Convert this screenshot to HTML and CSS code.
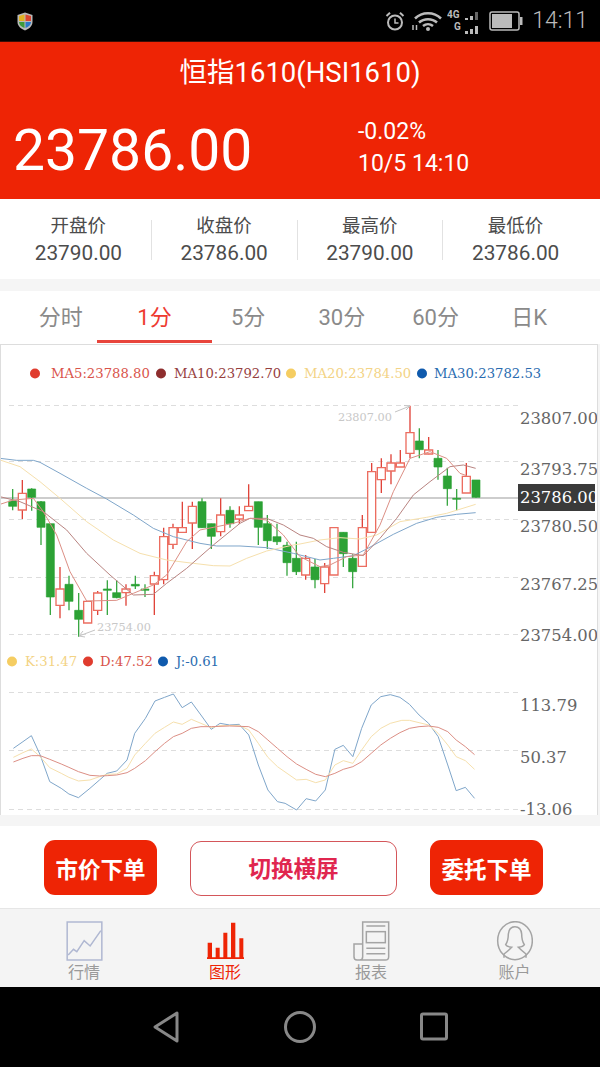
FILE: index.html
```html
<!DOCTYPE html>
<html>
  <head>
    <meta charset="UTF-8" />
    <title>恒指1610(HSI1610)</title>
    <link rel="stylesheet" href="styles.css">
  </head>
  <body>
    <div class="status-bar">
      <svg class="shield" width="16" height="19" viewBox="0 0 16 19">
        <path d="M8 .5 15.5 3v7c0 4-3.5 7-7.5 8.500C4 17 .5 14 .5 10V3z" fill="#b9b9b9"/>
        <path d="M7.500 2.500 2 4v5h5.500z" fill="#e0b020"/>
        <path d="M8.500 2.500 14 4v5H8.500z" fill="#d8452f"/>
        <path d="M2 10h5.500v6C4.500 15 2 13 2 10z" fill="#3d9a3a"/>
        <path d="M8.500 10H14c0 3-2.500 5-5.500 6z" fill="#2a78c8"/>
      </svg>
      <div class="status-right">
        <svg width="20" height="20" viewBox="0 0 20 20" fill="none" stroke="#bbb">
          <circle cx="10" cy="11.500" r="7" stroke-width="2"/>
          <path d="M10 7.500v4.500h3.500" stroke-width="1.500"/>
          <path d="M1.500 5 5 1.800M18.500 5 15 1.800" stroke-width="2"/>
        </svg>
        <svg class="wifi" width="30" height="20" viewBox="0 0 30 20" fill="none" stroke="#bbb" stroke-width="2.500">
          <path d="M3 7.500C10 .5 22 .5 29 7.500M7 11.500c5-4.500 13-4.500 18 0M11 15c3-2.500 7-2.500 10 0"/>
          <circle cx="16" cy="18" r="2" fill="#bbb" stroke="none"/>
          <path d="M1 19v-5M4.500 14v5" stroke-width="1.500"/>
        </svg>
        <svg class="signal" width="33" height="30" viewBox="0 0 33 30">
          <text class="net-label" x="0" y="12">4G</text>
          <text class="net-label" x="7" y="24">G</text>
          <path d="M18 12h3v2h-3zM23 10h3v4h-3z" fill="#bbb"/>
          <path d="M28 6h3v8h-3z" fill="#666"/>
          <path d="M18 25h3v3h-3zM23 23h3v5h-3zM28 20h3v8h-3z" fill="#bbb"/>
        </svg>
        <svg class="battery" width="34" height="20" viewBox="0 0 34 20">
          <rect x="1" y="1" width="29" height="18" rx="2" fill="none" stroke="#bbb" stroke-width="1.500"/>
          <rect x="3" y="3" width="20" height="14" fill="#bbb"/>
          <rect x="31" y="6" width="2.500" height="8" fill="#bbb"/>
        </svg>
        <span class="clock">14:11</span>
      </div>
    </div>

    <div class="quote-head">
      <div class="quote-title">恒指1610(HSI1610)</div>
      <div class="quote-row">
        <div class="quote-price">23786.00</div>
        <div class="quote-side">
          <div>-0.02%</div>
          <div>10/5 14:10</div>
        </div>
      </div>
    </div>

    <div class="stats">
      <div class="stat"><div>开盘价</div><div>23790.00</div></div>
      <div class="stat-sep"></div>
      <div class="stat"><div>收盘价</div><div>23786.00</div></div>
      <div class="stat-sep"></div>
      <div class="stat"><div>最高价</div><div>23790.00</div></div>
      <div class="stat-sep"></div>
      <div class="stat"><div>最低价</div><div>23786.00</div></div>
    </div>

    <div class="tabs">
      <div class="tab">分时</div>
      <div class="tab active">1分</div>
      <div class="tab">5分</div>
      <div class="tab">30分</div>
      <div class="tab">60分</div>
      <div class="tab">日K</div>
    </div>

    <div class="chart">
      <svg class="chart-svg" width="596" height="470" viewBox="1 345 596 470">
        <!-- legend -->
        <circle cx="35" cy="373.500" r="5" fill="#e03c2e"/>
        <text class="legend" x="51" y="378" fill="#d9534a">MA5:23788.80</text>
        <circle cx="161" cy="373.500" r="5" fill="#8e2e2e"/>
        <text class="legend" x="174" y="378" fill="#96403e">MA10:23792.70</text>
        <circle cx="291" cy="373.500" r="5" fill="#f5cd62"/>
        <text class="legend" x="304" y="378" fill="#f3d384">MA20:23784.50</text>
        <circle cx="422" cy="373.500" r="5" fill="#0f5aad"/>
        <text class="legend" x="434" y="378" fill="#2a6cb0">MA30:23782.53</text>

        <!-- grid -->
        <path class="grid" d="M9 405.500H518M9 461.500H518M9 519.500H518M9 577.500H518M9 634.500H518M9 692.500H518M9 750.500H518M9 809.500H518"/>
        <path class="last-line" d="M1 498H518"/>

        <!-- axis -->
        <text class="axis" x="520" y="424">23807.00</text>
        <text class="axis" x="520" y="475">23793.75</text>
        <text class="axis" x="520" y="532">23780.50</text>
        <text class="axis" x="520" y="590">23767.25</text>
        <text class="axis" x="520" y="641">23754.00</text>
        <text class="axis" x="520" y="711">113.79</text>
        <text class="axis" x="520" y="763">50.37</text>
        <text class="axis" x="520" y="815">-13.06</text>

        <!-- candles, 3x units -->
        <g transform="translate(0 345) scale(.33333)">
          <path class="wick-up" d="M67 405V522M180 666V820M263 769V834M293 738V810M378 718V782M463 680V810M491 548V718M519 536V612M547 470V562M577 470V612M662 460V574M718 484V536M746 418V498M917 630V704M974 654V744M1002 548V690M1087 510V664M1115 354V562M1144 340V444M1173 328V418M1201 315V366M1230 182V340M1286 276V328M1399 354V444"/>
          <path class="body-up" d="M55 445h24v50h-24zM168 732h24v49h-24zM251 769h24v65h-24zM281 744h24v52h-24zM366 732h24v11h-24zM451 692h24v25h-24zM479 575h24v129h-24zM507 548h24v50h-24zM535 548h24v14h-24zM565 484h24v50h-24zM650 510h24v50h-24zM706 510h24v12h-24zM734 484h24v13h-24zM905 640h24v50h-24zM962 666h24v50h-24zM990 548h24v142h-24zM1075 548h24v116h-24zM1103 380h24v182h-24zM1132 368h24v36h-24zM1161 354h24v24h-24zM1189 354h24v12h-24zM1218 263h24v62h-24zM1274 315h24v12h-24zM1387 394h24v50h-24z"/>
          <path class="wick-down" d="M38 432V496M95 430V497M123 468V600M151 536V810M207 692V796M236 744V875M322 706V810M350 706V760M406 692V732M435 718V756M606 460V548M634 536V612M690 484V548M775 470V600M802 510V612M831 536V600M861 590V692M889 590V690M945 642V730M1030 562V666M1058 628V730M1258 250V340M1314 315V404M1342 368V482M1370 432V496M1428 405V458"/>
          <path class="body-down" d="M26 468h24v16h-24zM83 432h24v25h-24zM111 470h24v77h-24zM139 536h24v220h-24zM195 718h24v51h-24zM224 796h24v27h-24zM310 732h24v4h-24zM338 743h24v15h-24zM394 718h24v5h-24zM423 732h24v4h-24zM594 470h24v78h-24zM622 536h24v38h-24zM678 496h24v40h-24zM763 470h24v77h-24zM790 536h24v51h-24zM819 575h24v15h-24zM849 601h24v52h-24zM877 640h24v40h-24zM933 666h24v38h-24zM1018 562h24v64h-24zM1046 640h24v40h-24zM1246 288h24v26h-24zM1302 340h24v26h-24zM1330 393h24v38h-24zM1358 460h24v3h-24zM1416 405h24v52h-24z"/>

          <polyline class="ma ma30" points="0,340 50,346 100,346 120,352 180,385 260,430 320,462 400,510 460,550 520,575 600,595 650,603 720,603 800,608 880,625 900,630 960,645 1000,640 1060,632 1100,612 1180,568 1250,535 1310,517 1370,508 1427,503"/>
          <polyline class="ma ma20" points="0,345 60,365 120,410 180,460 260,530 340,585 420,625 500,645 580,655 640,662 690,663 740,640 800,618 880,600 900,597 960,585 1020,578 1080,582 1130,570 1200,530 1280,517 1340,505 1427,478"/>
          <polyline class="ma ma10" points="0,455 60,470 130,500 200,555 260,625 330,690 400,750 460,748 500,715 560,670 640,600 720,535 750,520 800,520 850,540 900,570 940,580 980,605 1030,622 1090,632 1140,580 1190,520 1240,450 1290,410 1350,365 1390,360 1427,370"/>
          <polyline class="ma ma5" points="0,478 40,465 100,460 130,500 170,570 210,680 260,768 350,766 400,745 460,720 500,690 560,590 600,555 700,535 750,520 800,525 850,570 900,635 960,665 990,660 1040,635 1090,630 1140,540 1180,440 1230,340 1290,320 1340,340 1380,385 1400,392"/>
        </g>

        <!-- high and low marks -->
        <text class="mark" x="338" y="421">23807.00</text>
        <path class="mark-arrow" d="M395 412 410 406M404 405.500 410 406 406 410"/>
        <text class="mark" x="97" y="631">23754.00</text>
        <path class="mark-arrow" d="M95 630 79 636M85 637 79 636 83 631"/>

        <!-- kdj legend -->
        <circle cx="12" cy="661.500" r="5" fill="#f5cd62"/>
        <text class="legend" x="25" y="666" fill="#f3d384">K:31.47</text>
        <circle cx="88" cy="661.500" r="5" fill="#e03c2e"/>
        <text class="legend" x="100" y="666" fill="#d9534a">D:47.52</text>
        <circle cx="163" cy="661.500" r="5" fill="#0f5aad"/>
        <text class="legend" x="176" y="666" fill="#2a6cb0">J:-0.61</text>

        <!-- kdj lines -->
        <g transform="translate(0 640) scale(.3827 .33333)">
          <polyline class="ma kdj-j" points="35,325 60,305 82,287 105,345 130,425 160,445 180,462 205,473 235,445 260,420 280,400 305,393 332,360 352,280 380,235 405,183 430,172 453,162 476,203 500,186 525,225 552,268 575,250 600,255 625,253 650,285 675,375 700,450 725,485 745,490 775,510 800,476 825,483 850,450 875,328 897,316 922,350 945,265 970,195 995,170 1020,164 1045,172 1070,193 1095,225 1120,250 1145,290 1170,375 1192,452 1216,442 1240,475"/>
          <polyline class="ma kdj-k" points="35,352 60,338 82,327 105,350 130,383 160,400 180,412 205,423 235,420 260,410 280,403 305,402 332,385 352,345 380,310 405,280 430,262 453,246 476,253 500,238 525,250 552,263 575,257 625,256 650,270 675,310 700,352 725,380 750,400 775,420 800,418 825,428 850,420 875,375 897,362 922,370 945,330 970,290 995,265 1020,250 1050,241 1070,241 1095,248 1120,255 1145,280 1170,315 1192,350 1216,362 1240,388"/>
          <polyline class="ma kdj-d" points="35,366 60,355 82,347 105,347 130,358 160,372 180,382 205,395 235,406 260,408 280,407 305,405 332,398 352,385 380,362 405,335 430,310 453,290 476,280 500,265 525,260 552,260 600,258 650,260 675,275 700,300 725,325 750,350 775,372 800,388 825,403 850,410 875,400 897,388 922,380 945,365 970,340 995,315 1020,295 1045,278 1070,265 1095,260 1120,258 1145,262 1170,275 1192,300 1216,320 1240,344"/>
        </g>
      </svg>
      <div class="price-tag">23786.00</div>
    </div>

    <div class="gap-bottom"></div>

    <div class="actions">
      <div class="btn btn-red">市价下单</div>
      <div class="btn btn-line">切换横屏</div>
      <div class="btn btn-red">委托下单</div>
    </div>

    <div class="nav">
      <div class="nav-item">
        <svg width="37" height="40" viewBox="78 33 110 120" fill="none" stroke="#b0b8d2" stroke-width="4.500">
          <rect x="81" y="36" width="104" height="114"/>
          <path d="M84 135 100 118 110 125 132 92 150 108 182 62"/>
        </svg>
        <span>行情</span>
      </div>
      <div class="nav-item active">
        <svg width="37" height="40" viewBox="500 30 111 120" fill="#ee2405">
          <path d="M502 95h13v45h-13zM526 110h12v30h-12zM549 65h12v75h-12zM572 35h13v105h-13zM597 82h12v58h-12zM500 139h111v5H500z"/>
        </svg>
        <span>图形</span>
      </div>
      <div class="nav-item">
        <svg width="37" height="40" viewBox="68 33 111 120" fill="none" stroke="#a4a4a4" stroke-width="4.500">
          <path d="M97 100V36H175V140Q175 150 165 150H80Q71 150 71 140V102H97V140Q97 150 88 150"/>
          <path d="M108 48H165M108 115H165M108 131H165"/>
          <rect x="108" y="65" width="57" height="33"/>
        </svg>
        <span>报表</span>
      </div>
      <div class="nav-item">
        <svg width="37" height="40" viewBox="498 33 111 120" fill="none" stroke="#a4a4a4" stroke-width="4.500">
          <ellipse cx="555" cy="92" rx="52" ry="57"/>
          <path d="M522 143V132Q535 122 545 112Q530 110 527 104Q535 92 535 72Q537 50 555 50Q573 50 575 72Q575 92 583 104Q580 110 565 112Q575 122 588 132V143"/>
        </svg>
        <span>账户</span>
      </div>
    </div>

    <div class="system-bar">
      <svg width="28" height="32" viewBox="0 0 28 32" fill="none" stroke="#888" stroke-width="3" stroke-linejoin="round">
        <path d="M25 2V30L3 16z"/>
      </svg>
      <svg width="32" height="32" viewBox="0 0 32 32" fill="none" stroke="#888" stroke-width="3">
        <circle cx="16" cy="16" r="14.500"/>
      </svg>
      <svg width="28" height="32" viewBox="0 0 28 32" fill="none" stroke="#888" stroke-width="3" stroke-linejoin="round">
        <rect x="1.500" y="3" width="25" height="25" rx="1.500"/>
      </svg>
    </div>
  </body>
</html>
```

FILE: styles.css
```css
body {
  margin: 0;
  width: 600px;
  height: 1067px;
  overflow: hidden;
  background-color: #f5f5f5;
  font-family: Roboto, "Noto Sans CJK SC", sans-serif;
}

/* status bar */
.status-bar {
  height: 41px;
  background-color: #000;
  border-bottom: 1px solid #3a0d06;
  display: flex;
  align-items: center;
  justify-content: space-between;
  padding: 0 12px 0 17px;
}
.shield {
  margin-top: 1px;
}
.status-right {
  display: flex;
  align-items: center;
}
.wifi {
  margin-left: 7px;
}
.signal {
  margin-left: 5px;
}
.battery {
  margin-left: 9px;
}
.net-label {
  font-family: Roboto, sans-serif;
  font-size: 10px;
  font-weight: 700;
  fill: #bbb;
}
.clock {
  margin-left: 9px;
  font-size: 23px;
  font-weight: 300;
  color: #bbb;
}

/* quote header */
.quote-head {
  height: 157px;
  background-color: #ee2405;
  color: #fff;
  padding-top: 15px;
  box-sizing: border-box;
}
.quote-title {
  font-size: 27.500px;
  line-height: 32px;
  text-align: center;
}
.quote-row {
  display: flex;
  margin-top: 29px;
  padding-left: 13px;
}
.quote-price {
  width: 345px;
  font-size: 57px;
  line-height: 66px;
}
.quote-side {
  margin-top: -2px;
  font-size: 23px;
  line-height: 32px;
}

/* open, close, high, low */
.stats {
  height: 80px;
  background-color: #fff;
  display: flex;
  align-items: center;
  padding: 2px 12px 0 6px;
  box-sizing: border-box;
}
.stat {
  flex: 1;
  text-align: center;
  color: #4c4c4c;
  font-size: 20.800px;
  line-height: 27px;
}
.stat div:first-child {
  font-size: 18.500px;
}
.stat-sep {
  width: 1px;
  height: 40px;
  background-color: #e2e2e2;
}

/* period tabs */
.tabs {
  height: 53px;
  margin-top: 12px;
  background-color: #fff;
  display: flex;
  padding: 0 24px 0 14px;
}
.tab {
  position: relative;
  flex: 1;
  text-align: center;
  font-size: 22px;
  line-height: 54px;
  color: #8a8a8a;
}
.tab.active {
  color: #ee3a30;
}
.tab.active::after {
  content: "";
  position: absolute;
  left: -11px;
  right: -11px;
  bottom: 1px;
  height: 3px;
  background-color: #e8453c;
}

/* chart */
.chart {
  position: relative;
  width: 598px;
  height: 471px;
  background-color: #fff;
  border: 1px solid #ddd;
  border-bottom: 0;
  box-sizing: border-box;
  overflow: hidden;
}
.chart-svg {
  display: block;
}
.legend {
  font-family: "DejaVu Serif", serif;
  font-size: 13.200px;
}
.axis {
  font-family: "DejaVu Serif", serif;
  font-size: 16.400px;
  fill: #666;
}
.mark {
  font-family: "DejaVu Serif", serif;
  font-size: 11.300px;
  fill: #c8c8c8;
}
.mark-arrow {
  fill: none;
  stroke: #c4c4c4;
}
.grid {
  fill: none;
  stroke: #ddd;
  stroke-dasharray: 5 4;
}
.last-line {
  stroke: #bdbdbd;
  stroke-width: 1.500;
}
.wick-up {
  stroke: #e0443a;
  stroke-width: 4;
}
.body-up {
  fill: #fff;
  stroke: #ec6d60;
  stroke-width: 4;
}
.wick-down {
  stroke: #3aa743;
  stroke-width: 4;
}
.body-down {
  fill: #2ca235;
  stroke: #2ca235;
  stroke-width: 2;
}
.ma {
  fill: none;
  stroke-width: 1;
  vector-effect: non-scaling-stroke;
}
.ma5,
.kdj-d {
  stroke: #dc8f85;
}
.ma10 {
  stroke: #b98481;
}
.ma20,
.kdj-k {
  stroke: #f6e0ad;
}
.ma30,
.kdj-j {
  stroke: #7fa6ca;
}
.price-tag {
  position: absolute;
  left: 517px;
  top: 139px;
  width: 75px;
  height: 27px;
  overflow: hidden;
  background-color: #3a3a3a;
  color: #fff;
  font-family: "DejaVu Serif", serif;
  font-size: 16.400px;
  line-height: 27px;
  padding-left: 2px;
  white-space: nowrap;
}

.gap-bottom {
  height: 11px;
}

/* action buttons */
.actions {
  height: 68px;
  background-color: #fff;
  border-bottom: 1px solid #e6e6e6;
  display: flex;
  align-items: flex-start;
  padding: 14px 57px 0 44px;
  gap: 33px;
}
.btn {
  height: 55px;
  padding-top: 2px;
  line-height: 56px;
  width: 113px;
  border-radius: 11px;
  text-align: center;
  font-size: 22.500px;
  font-weight: 700;
  box-sizing: border-box;
}
.btn-red {
  background-color: #ee2405;
  color: #fff;
}
.btn-line {
  flex: 1;
  margin-top: 1px;
  padding-top: 0;
  background-color: #fff;
  border: 1px solid #d4565a;
  color: #e0264f;
  line-height: 55px;
}

/* bottom nav */
.nav {
  height: 78px;
  background-color: #f4f4f4;
  display: grid;
  grid-template-columns: 142px 140px 152px 135px;
  padding: 12px 0 0 13px;
  box-sizing: border-box;
}
.nav-item {
  display: flex;
  flex-direction: column;
  align-items: center;
  gap: 2px;
  font-size: 16px;
  line-height: 20px;
  color: #9a9a9a;
}
.nav-item svg {
  display: block;
}
.nav-item.active {
  color: #ee2405;
}

/* android buttons */
.system-bar {
  height: 80px;
  background-color: #000;
  display: flex;
  align-items: center;
  justify-content: center;
  gap: 104px;
}
```
